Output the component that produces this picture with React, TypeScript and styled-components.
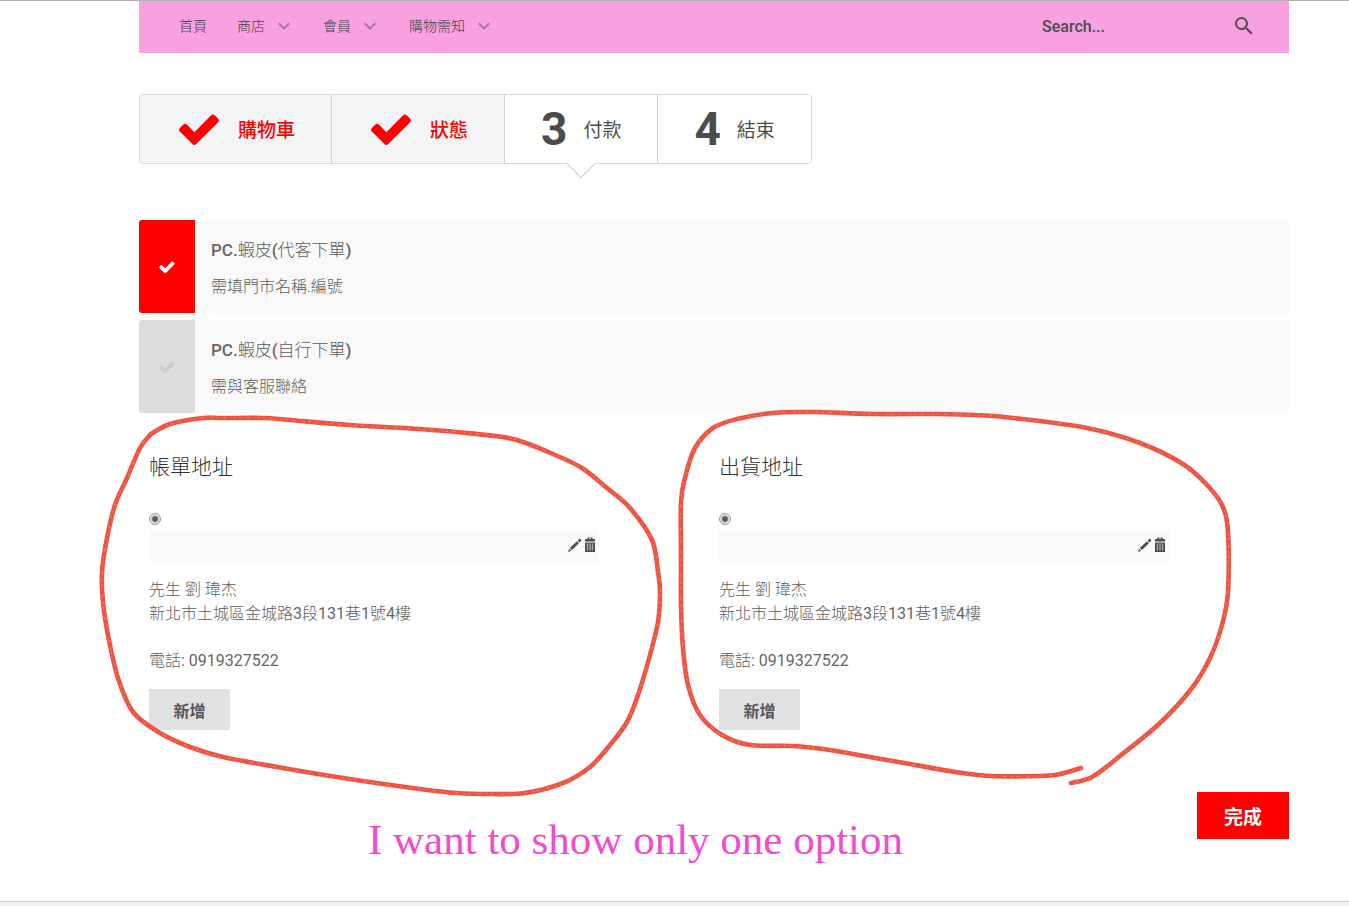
import React, { useState } from 'react';
import styled, { createGlobalStyle } from 'styled-components';

const GlobalStyle = createGlobalStyle`
  *, *::before, *::after { box-sizing: border-box; }
  body {
    margin: 0;
    background: #fff;
    color: #5c5c5c;
    font-family: Roboto, "Noto Sans CJK TC", sans-serif;
    font-size: 16px;
    line-height: 24px;
  }
  button, input { font-family: inherit; }
`;

const Page = styled.div`
  position: relative;
  border-top: 1px solid #b0b0b0;
`;

const Content = styled.div`
  padding: 0 60px 0 139px;
`;

const NavBar = styled.header`
  display: flex;
  align-items: center;
  justify-content: space-between;
  height: 52px;
  padding: 0 33px 2px 25px;
  background: #f8a1e1;
`;

const NavList = styled.nav`
  display: flex;
`;

const NavLink = styled.a`
  display: flex;
  align-items: center;
  gap: 10px;
  padding: 0 15px;
  color: #3f3f3f;
  font-size: 14px;
  font-weight: 300;
  text-decoration: none;
  svg { fill: #a3779b; }
`;

const SearchForm = styled.form`
  display: flex;
  align-items: center;
`;

const SearchInput = styled.input`
  width: 190px;
  padding: 0;
  border: 0;
  outline: 0;
  background: transparent;
  color: #4c4c4c;
  font-size: 16px;
  font-weight: 500;
  &::placeholder { color: #4c4c4c; opacity: 1; }
`;

const IconButton = styled.button`
  display: flex;
  padding: 0;
  border: 0;
  background: transparent;
  color: #4c4c4c;
  cursor: pointer;
  svg { fill: currentColor; }
`;

const Steps = styled.ol`
  display: flex;
  width: max-content;
  margin: 41px 0 56px;
  padding: 0;
  border: 1px solid #d9dadb;
  border-radius: 4px;
  list-style: none;
`;

const Step = styled.li<{ $done?: boolean; $current?: boolean }>`
  position: relative;
  display: flex;
  align-items: center;
  gap: 16px;
  height: 68px;
  padding: 0 36px;
  background: ${(p) => (p.$done ? '#f3f4f6' : '#fff')};
  color: ${(p) => (p.$done ? '#f00' : '#4c4c4c')};
  font-size: 19px;
  font-weight: ${(p) => (p.$done ? 500 : 400)};
  & + & { border-left: 1px solid #d0d1d2; }
  &:first-child { border-radius: 3px 0 0 3px; }
  &:last-child { border-radius: 0 3px 3px 0; }
  ${(p) =>
    p.$current &&
    `&::after {
      content: '';
      position: absolute;
      left: 50%;
      bottom: -11px;
      width: 20px;
      height: 20px;
      margin-left: -10px;
      border: solid #ccc;
      border-width: 0 1px 1px 0;
      background: linear-gradient(135deg, transparent 50%, #fff 50%);
      transform: rotate(45deg);
    }`}
  svg { fill: currentColor; }
`;

const StepLabel = styled.span`
  padding-top: 3px;
`;

const StepNumber = styled.span`
  font-size: 46px;
  font-weight: 700;
  line-height: 46px;
`;

const Options = styled.div`
  display: grid;
  gap: 7px;
`;

const Option = styled.label`
  display: flex;
  height: 93px;
  background: #f9f9f9;
  border-radius: 3px;
  overflow: hidden;
  cursor: pointer;
`;

const OptionInput = styled.input`
  position: absolute;
  opacity: 0;
  pointer-events: none;
`;

const OptionMark = styled.span<{ $on: boolean }>`
  display: flex;
  align-items: center;
  justify-content: center;
  width: 56px;
  background: ${(p) => (p.$on ? '#f00' : '#ddd')};
  svg { fill: ${(p) => (p.$on ? '#fff' : '#ccc')}; }
`;

const OptionText = styled.span`
  display: flex;
  flex-direction: column;
  gap: 13px;
  padding: 18px 16px;
  font-weight: 300;
`;

const OptionTitle = styled.span`
  font-size: 17px;
  b { font-weight: 500; color: #666; }
`;

const Addresses = styled.div`
  display: grid;
  grid-template-columns: 1fr 1fr;
  margin-top: 39px;
  padding-left: 10px;
`;

const Address = styled.section`
  padding-right: 120px;
`;

const AddressTitle = styled.h2`
  margin: 0 0 31px;
  color: #333;
  font-size: 21px;
  font-weight: 300;
  line-height: 30px;
`;

const Radio = styled.input`
  appearance: none;
  display: block;
  width: 12px;
  height: 12px;
  margin: 0 0 4px;
  border: 1px solid #9a9a9a;
  border-radius: 50%;
  background: radial-gradient(circle, #555 0 2px, #e4e4e4 4px);
`;

const AddressBar = styled.div`
  display: flex;
  align-items: center;
  justify-content: flex-end;
  gap: 2px;
  height: 32px;
  margin-bottom: 17px;
  padding-right: 3px;
  background: #f9f9f9;
`;

const Lines = styled.address`
  margin-bottom: 16px;
  color: #666;
  font-style: normal;
  font-weight: 400;
  p { margin: 0; }
  p + p:last-child { margin-top: 23px; }
  span { font-weight: 300; color: #5c5c5c; }
`;

const AddButton = styled.button`
  min-width: 81px;
  height: 41px;
  padding: 0 24px;
  border: 0;
  background: #e0e1e2;
  color: #5c5558;
  font-size: 16px;
  font-weight: 700;
  cursor: pointer;
`;

const Actions = styled.div`
  display: flex;
  justify-content: flex-end;
  margin: 62px 0;
`;

const FinishButton = styled.button`
  height: 47px;
  padding: 0 27px;
  border: 0;
  background: #f00;
  color: #fff;
  font-size: 19px;
  font-weight: 700;
  cursor: pointer;
`;

const Footer = styled.footer`
  height: 5px;
  border-top: 1px solid #d2d2d2;
  background: #f1f1f1;
`;

const Markup = styled.svg`
  position: absolute;
  top: -1px;
  left: 0;
  pointer-events: none;
  fill: none;
  stroke-linecap: round;
  stroke-linejoin: round;
`;

const Note = styled.p`
  position: absolute;
  left: 368px;
  bottom: 42px;
  margin: 0;
  color: #f24bce;
  font-family: "Liberation Serif", serif;
  font-size: 43px;
  line-height: 48px;
  white-space: nowrap;
`;

const Check = ({ size }: { size: number }) => (
  <svg width={size} height={size} viewBox="0 0 1792 1792" aria-hidden="true">
    <path d="M1671 566q0 40-28 68l-724 724-136 136q-28 28-68 28t-68-28l-136-136-362-362q-28-28-28-68t28-68l136-136q28-28 68-28t68 28l294 295 656-657q28-28 68-28t68 28l136 136q28 28 28 68z" />
  </svg>
);

const Chevron = () => (
  <svg width="18" height="18" viewBox="3 3 18 18" aria-hidden="true">
    <path d="M7.41 8.59L12 13.17l4.59-4.58L18 10l-6 6-6-6z" />
  </svg>
);

const SearchIcon = () => (
  <svg width="24" height="24" viewBox="0 0 24 24" aria-hidden="true">
    <path d="M15.5 14h-.79l-.28-.27A6.47 6.47 0 0 0 16 9.5 6.5 6.5 0 1 0 9.5 16c1.61 0 3.09-.59 4.23-1.57l.27.28v.79l5 4.99L20.49 19l-4.99-5zm-6 0C7.01 14 5 11.99 5 9.5S7.01 5 9.5 5 14 7.01 14 9.5 11.99 14 9.5 14z" />
  </svg>
);

const PencilIcon = () => (
  <svg width="15" height="16" viewBox="0 0 15 16" aria-hidden="true">
    <path d="M1 15l1.2-3.2 2 2zM2.8 11.100L10 4.300l1.900 1.900-7 6.900zM10.700 3.600l1.500-1.500q.6-.5 1.200 0l.6.600q.5.600 0 1.200l-1.500 1.500z" />
  </svg>
);

const TrashIcon = () => (
  <svg width="12" height="16" viewBox="0 0 12 16" aria-hidden="true">
    <path fillRule="evenodd" d="M3.500 0.500h5V2h-5zM5 1.200h2V2H5z" />
    <path d="M1 2h10v2.500H1zM1 5.500h10V15H1z" />
    <path d="M3.500 6.500v7M6 6.500v7M8.500 6.500v7" stroke="#a8a8a8" strokeWidth="1.400" />
  </svg>
);

type Point = [number, number];

/* Joins freehand points with a Catmull-Rom spline. */
const smooth = (pts: Point[]) =>
  pts.slice(0, -1).reduce((d, p1, i) => {
    const p0 = pts[i - 1] ?? p1;
    const p2 = pts[i + 1];
    const p3 = pts[i + 2] ?? p2;
    const c = [
      p1[0] + (p2[0] - p0[0]) / 6,
      p1[1] + (p2[1] - p0[1]) / 6,
      p2[0] - (p3[0] - p1[0]) / 6,
      p2[1] - (p3[1] - p1[1]) / 6,
    ].map((n) => n.toFixed(1));
    return `${d}C${c.join(' ')} ${p2.join(' ')}`;
  }, `M${pts[0].join(' ')}`);

const loops: Point[][] = [
  [
    [151, 434], [170, 424], [203, 418], [223, 418], [263, 418], [290, 420], [350, 425], [420, 429],
    [467, 433], [503, 437], [523, 442], [553, 454], [582, 468], [607, 488], [630, 508], [652, 540],
    [658, 572], [660, 592], [658, 622], [650, 655], [638, 695], [627, 722], [610, 745], [590, 767],
    [563, 783], [525, 793], [490, 794], [457, 793], [420, 789], [343, 778], [277, 767], [223, 757],
    [190, 747], [160, 733], [133, 712], [118, 678], [108, 635], [103, 602], [102, 572], [107, 538],
    [115, 505], [127, 478], [140, 448], [151, 434],
  ],
  [
    [1081, 768], [1060, 774], [1040, 776], [990, 776], [955, 772], [910, 764], [870, 757], [830, 750],
    [793, 746], [750, 745], [722, 735], [700, 715], [688, 685], [683, 648], [681, 605], [681, 555],
    [681, 502], [685, 478], [695, 448], [713, 428], [737, 419], [773, 413], [813, 412], [873, 414],
    [937, 414], [975, 415], [1013, 418], [1087, 428], [1140, 443], [1183, 464], [1207, 485],
    [1222, 505], [1228, 532], [1228, 592], [1222, 625], [1210, 658], [1192, 688], [1160, 723],
    [1120, 756], [1092, 777], [1071, 783],
  ],
];

const navItems = [
  { label: '首頁', menu: false },
  { label: '商店', menu: true },
  { label: '會員', menu: true },
  { label: '購物需知', menu: true },
];

const options = [
  { name: '蝦皮', kind: '代客下單', note: '需填門市名稱.編號' },
  { name: '蝦皮', kind: '自行下單', note: '需與客服聯絡' },
];

const AddressCard = ({ title, group }: { title: string; group: string }) => (
  <Address>
    <AddressTitle>{title}</AddressTitle>
    <Radio type="radio" name={group} aria-label={title} defaultChecked />
    <AddressBar>
      <IconButton type="button" aria-label="編輯"><PencilIcon /></IconButton>
      <IconButton type="button" aria-label="刪除"><TrashIcon /></IconButton>
    </AddressBar>
    <Lines>
      <p><span>先生 劉 瑋杰</span></p>
      <p>
        <span>新北市土城區金城路</span>3<span>段</span>131<span>巷</span>1<span>號</span>4<span>樓</span>
      </p>
      <p><span>電話</span>: 0919327522</p>
    </Lines>
    <AddButton type="button">新增</AddButton>
  </Address>
);

export default function App() {
  const [selected, setSelected] = useState(0);
  return (
    <>
      <GlobalStyle />
      <Page>
        <Content>
          <NavBar>
            <NavList>
              {navItems.map((item) => (
                <NavLink key={item.label} href="#">
                  {item.label}
                  {item.menu && <Chevron />}
                </NavLink>
              ))}
            </NavList>
            <SearchForm role="search">
              <SearchInput type="text" placeholder="Search..." aria-label="Search" />
              <IconButton type="submit" aria-label="Search"><SearchIcon /></IconButton>
            </SearchForm>
          </NavBar>
          <main>
            <Steps>
              <Step $done><Check size={46} /><StepLabel>購物車</StepLabel></Step>
              <Step $done><Check size={46} /><StepLabel>狀態</StepLabel></Step>
              <Step $current aria-current="step">
                <StepNumber>3</StepNumber><StepLabel>付款</StepLabel>
              </Step>
              <Step><StepNumber>4</StepNumber><StepLabel>結束</StepLabel></Step>
            </Steps>
            <Options>
              {options.map((o, i) => (
                <Option key={o.kind}>
                  <OptionInput
                    type="radio"
                    name="payment"
                    checked={selected === i}
                    onChange={() => setSelected(i)}
                  />
                  <OptionMark $on={selected === i}><Check size={18} /></OptionMark>
                  <OptionText>
                    <OptionTitle>
                      <b>PC.</b>{o.name}<b>(</b>{o.kind}<b>)</b>
                    </OptionTitle>
                    <span>{o.note}</span>
                  </OptionText>
                </Option>
              ))}
            </Options>
            <Addresses>
              <AddressCard title="帳單地址" group="billing" />
              <AddressCard title="出貨地址" group="shipping" />
            </Addresses>
            <Actions>
              <FinishButton type="button">完成</FinishButton>
            </Actions>
          </main>
        </Content>
        <Footer />
        <Markup width="1349" height="906" viewBox="0 0 1349 906" aria-hidden="true">
          {loops.map((pts, i) => (
            <g key={i}>
              <path d={smooth(pts)} stroke="#ee5442" strokeWidth="4.600" />
              <path d={smooth(pts)} stroke="#f58a7e" strokeWidth="1" strokeDasharray="1 6 2 9 1 4" />
            </g>
          ))}
        </Markup>
        <Note>I want to show only one option</Note>
      </Page>
    </>
  );
}
